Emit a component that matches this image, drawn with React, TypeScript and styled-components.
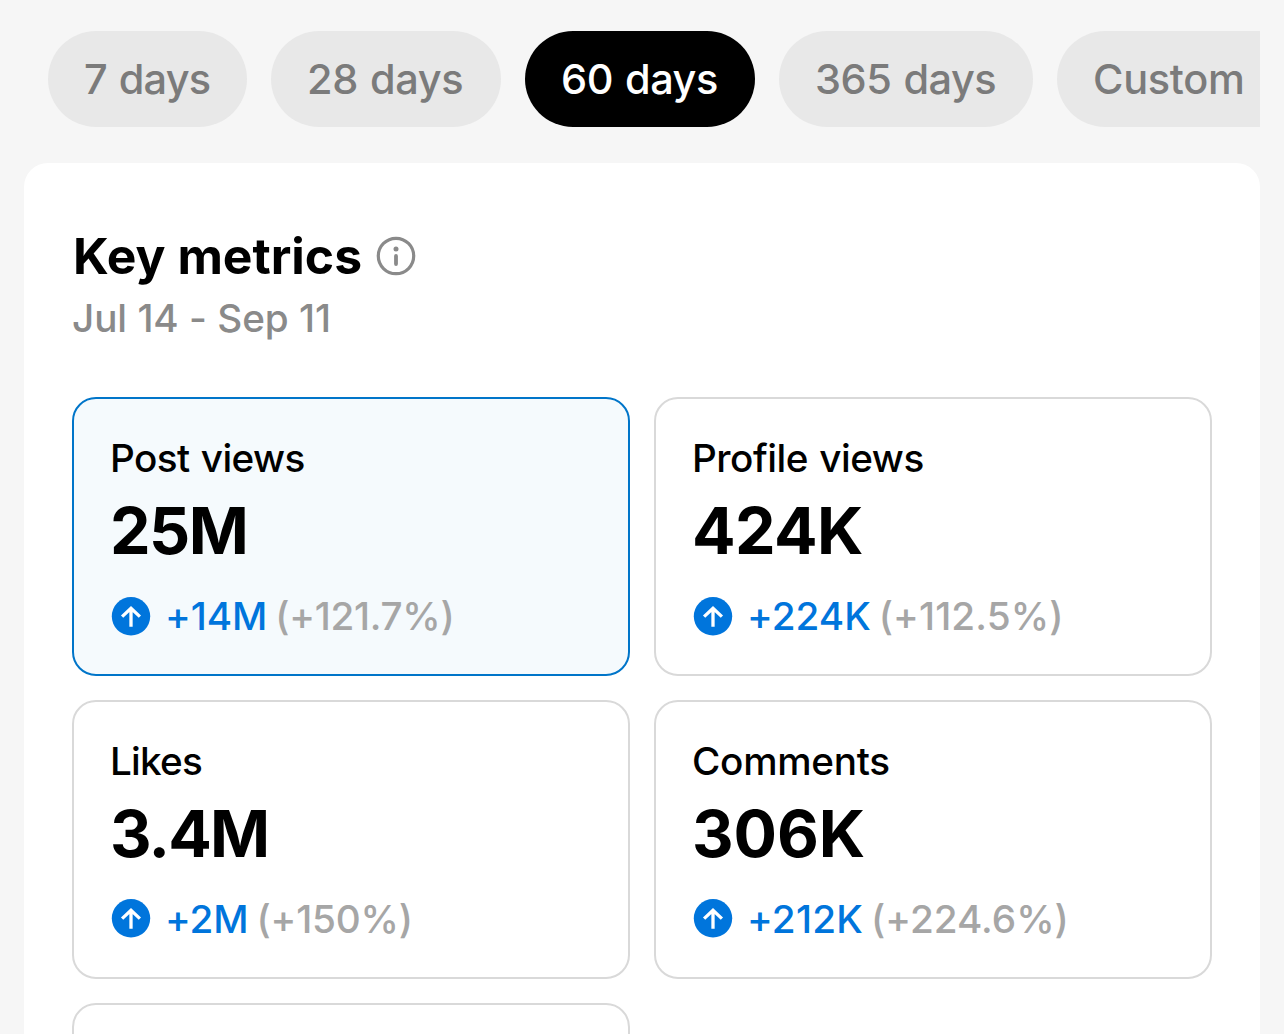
import React from "react";
import styled, { createGlobalStyle } from "styled-components";

const Global = createGlobalStyle`
  * { box-sizing: border-box; }
  body { margin: 0; background: #f6f6f6; overflow: hidden; }
`;
const Page = styled.main`
  height: 1034px; padding: 31px 24px 0; background: #f6f6f6; overflow: hidden;
  font-family: Inter, "Liberation Sans", sans-serif; color: #000;
  font-feature-settings: "calt" 0;
`;
const Tabs = styled.nav`
  display: flex; gap: 24px; padding-left: 24px; overflow: hidden;
`;
const Tab = styled.button<{ $w: number; $active?: boolean; $ls: number }>`
  flex: 0 0 ${p => p.$w}px; height: 96px; padding: 0 0 1px 36px; border: 0; border-radius: 48px;
  text-align: left; white-space: nowrap;
  background: ${p => (p.$active ? "#000" : "#e8e8e8")};
  color: ${p => (p.$active ? "#fff" : "#7b7b7b")};
  font: 550 41.5px Inter, sans-serif; letter-spacing: ${p => p.$ls}px; word-spacing: 1.5px;
`;
const Panel = styled.section`
  margin-top: 36px; height: 900px; padding: 63px 48px 0; border-radius: 24px; background: #fff;
`;
const TitleRow = styled.div`
  display: flex; align-items: center; gap: 15px; height: 60px; padding-left: 1px;
`;
const Title = styled.h1`
  margin: 0; width: 288px; white-space: nowrap; font-size: 49.8px; line-height: 60px; font-weight: 700;
`;
const Dates = styled.p`
  margin: 8px 0 0; font-size: 38.7px; line-height: 48px; height: 48px; font-weight: 550; color: #8a8a8a;
  letter-spacing: -0.1px; word-spacing: 0.2px;
`;
const Grid = styled.div`
  display: grid; grid-template-columns: 558px 558px; grid-auto-rows: 279px; gap: 24px; margin-top: 55px;
`;
const Card = styled.article<{ $selected?: boolean }>`
  border: 2px solid ${p => (p.$selected ? "#0075c9" : "#d9d9d9")};
  background: ${p => (p.$selected ? "#f5fafd" : "#fff")};
  border-radius: 24px; padding: 35px 37px 0 36px;
`;
const Label = styled.div<{ $ls: number }>`
  font-size: 38.7px; line-height: 48px; font-weight: 550; white-space: nowrap; letter-spacing: ${p => p.$ls}px;
  word-spacing: 1.5px;
`;
const Value = styled.div<{ $ls: number }>`
  margin-top: 11px; font-size: 64.5px; line-height: 76px; font-weight: 700; letter-spacing: ${p => p.$ls}px;
`;
const Change = styled.div<{ $lift?: number }>`
  display: flex; align-items: center; height: 48px; margin-top: 23px; font-size: 38.7px; font-weight: 550; white-space: nowrap;
  svg { flex: none; margin: 0 14px ${p => p.$lift ?? 0}px 1px; }
`;
const Delta = styled.span<{ $ls: number }>`color: #0075dc; margin-right: 8px; letter-spacing: ${p => p.$ls}px;`;
const Percent = styled.span<{ $ls: number }>`color: #a6a6a6; letter-spacing: ${p => p.$ls}px;`;

const tabs = [
  { label: "7 days", w: 199, ls: -0.8 },
  { label: "28 days", w: 230, ls: -0.4 },
  { label: "60 days", w: 230, ls: -0.5, active: true },
  { label: "365 days", w: 254, ls: -0.5 },
  { label: "Custom", w: 264, ls: -0.3 },
];
const metrics = [
  { label: "Post views", value: "25M", delta: "+14M", pct: "(+121.7%)", selected: true, ls: -0.6, vls: -1.6, dls: -0.1, pls: -0.3 },
  { label: "Profile views", value: "424K", delta: "+224K", pct: "(+112.5%)", ls: -0.5, vls: -0.6, dls: 0, pls: 0.1 },
  { label: "Likes", value: "3.4M", delta: "+2M", pct: "(+150%)", ls: -0.8, vls: -1.8, dls: -0.1, pls: -0.2, lift: 2 },
  { label: "Comments", value: "306K", delta: "+212K", pct: "(+224.6%)", ls: -0.3, vls: -0.1, dls: 0.2, pls: 0 , lift: 2 },
];

const Up = () => (
  <svg width="40" height="39" viewBox="0 0 40 39" fill="none">
    <circle cx="20" cy="19.3" r="19.2" fill="#0075dc" />
    <path d="M20 29.8V11.5M11.1 19.6l8.9-8.3 8.9 8.3" stroke="#fff" strokeWidth="3.3" />
  </svg>
);
const Info = () => (
  <svg width="40" height="40" viewBox="0 0 40 40" fill="none">
    <circle cx="20" cy="20" r="17.7" stroke="#8a8a8a" strokeWidth="3.2" />
    <circle cx="20" cy="12.9" r="2.5" fill="#8a8a8a" />
    <path d="M20 20V28" stroke="#8a8a8a" strokeWidth="3.8" strokeLinecap="round" />
  </svg>
);

export default function App() {
  return (
    <Page>
      <Global />
      <Tabs>
        {tabs.map(t => <Tab key={t.label} $w={t.w} $ls={t.ls} $active={t.active}>{t.label}</Tab>)}
      </Tabs>
      <Panel>
        <TitleRow><Title>Key metrics</Title><Info /></TitleRow>
        <Dates>Jul 14 - Sep 11</Dates>
        <Grid>
          {metrics.map(m => (
            <Card key={m.label} $selected={m.selected}>
              <Label $ls={m.ls}>{m.label}</Label>
              <Value $ls={m.vls}>{m.value}</Value>
              <Change $lift={m.lift}>
                <Up /><Delta $ls={m.dls}>{m.delta}</Delta><Percent $ls={m.pls}>{m.pct}</Percent>
              </Change>
            </Card>
          ))}
          <Card />
        </Grid>
      </Panel>
    </Page>
  );
}
